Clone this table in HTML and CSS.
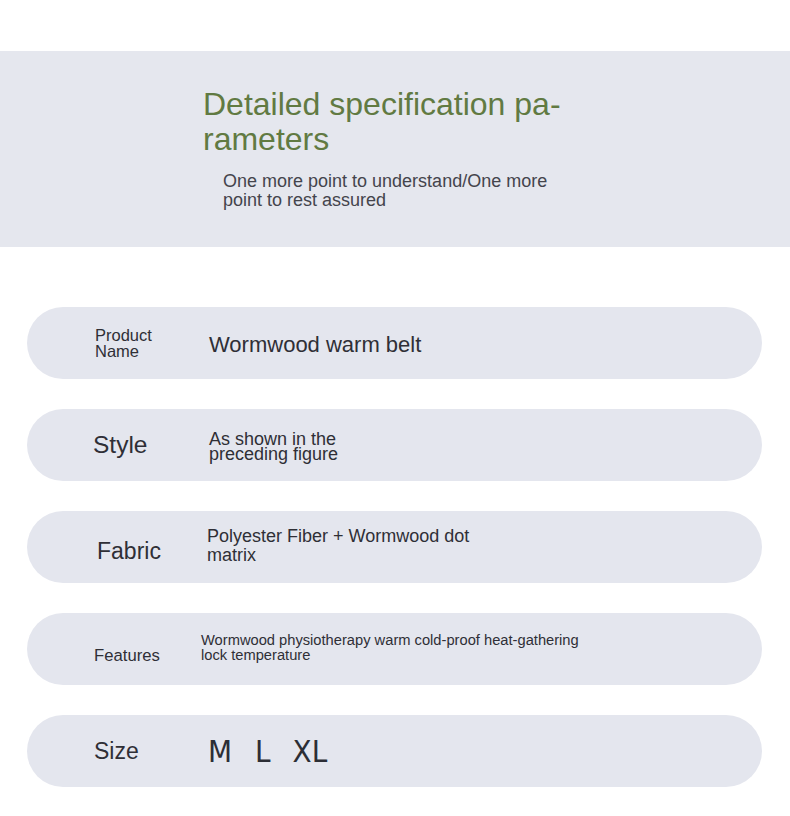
FILE: index.html
```html
<!DOCTYPE html>
<html lang="en">
<head>
<meta charset="utf-8">
<link rel="stylesheet" href="styles.css">
</head>
<body>
<div class="page">
  <header class="hero">
    <div class="hero-inner">
      <h1 class="title">Detailed specification pa-<br>rameters</h1>
      <p class="subtitle">One more point to understand/One more<br>point to rest assured</p>
    </div>
  </header>
  <section class="specs">
    <div class="pill">
      <div class="label label-pn">Product<br>Name</div>
      <div class="value value-pn">Wormwood warm belt</div>
    </div>
    <div class="pill">
      <div class="label label-style">Style</div>
      <div class="value value-style">As shown in the<br>preceding figure</div>
    </div>
    <div class="pill">
      <div class="label label-fabric">Fabric</div>
      <div class="value value-fabric">Polyester Fiber + Wormwood dot<br>matrix</div>
    </div>
    <div class="pill">
      <div class="label label-feat">Features</div>
      <div class="value value-feat">Wormwood physiotherapy warm cold-proof heat-gathering<br>lock temperature</div>
    </div>
    <div class="pill">
      <div class="label label-size">Size</div>
      <div class="value value-size"><span>M</span><span>L</span><span class="size-xl">XL</span></div>
    </div>
  </section>
</div>
</body>
</html>
```

FILE: styles.css
```css
html, body {
  margin: 0;
  padding: 0;
  background: #ffffff;
}

body {
  font-family: "Liberation Sans", Arial, sans-serif;
  color: #2f2f36;
}

.page {
  width: 790px;
  padding-top: 51px;
}

.hero {
  background: #e5e7ee;
  height: 196px;
  box-sizing: border-box;
  padding-top: 36px;
}

.hero-inner {
  padding-left: 203px;
}

.title {
  margin: 0;
  font-weight: normal;
  font-size: 32px;
  line-height: 35px;
  color: #617a42;
}

.subtitle {
  margin: 15px 0 0 20px;
  font-size: 18px;
  line-height: 19px;
  color: #44444c;
}

.specs {
  padding: 60px 28px 0 27px;
  display: flex;
  flex-direction: column;
  gap: 30px;
}

.pill {
  height: 72px;
  border-radius: 36px;
  background: #e4e6ee;
  display: flex;
  align-items: center;
}

.label {
  width: 114px;
  box-sizing: border-box;
  padding-left: 68px;
  flex: none;
  white-space: nowrap;
}

.value {
  white-space: nowrap;
}

.label-pn {
  font-size: 16.5px;
  line-height: 16px;
}

.value-pn {
  font-size: 22px;
  margin-top: 4px;
  padding-left: 68px;
}

.label-style {
  font-size: 24.5px;
  padding-left: 66px;
}

.value-style {
  font-size: 18px;
  line-height: 15px;
  padding-left: 68px;
  margin-top: 4px;
}

.label-fabric {
  font-size: 23px;
  padding-left: 70px;
  margin-top: 8px;
}

.value-fabric {
  font-size: 18px;
  line-height: 19px;
  padding-left: 66px;
  margin-top: -2px;
}

.label-feat {
  font-size: 16.7px;
  padding-left: 67px;
  margin-top: 13px;
}

.value-feat {
  font-size: 14.7px;
  line-height: 15px;
  padding-left: 60px;
  margin-top: -2px;
}

.label-size {
  font-size: 23px;
  padding-left: 67px;
}

.value-size {
  font-family: "DejaVu Sans Condensed", "DejaVu Sans", sans-serif;
  font-size: 31px;
  padding-left: 67px;
  display: flex;
  gap: 23px;
  color: #2c2e35;
}

.size-xl {
  margin-left: -1px;
}
```
